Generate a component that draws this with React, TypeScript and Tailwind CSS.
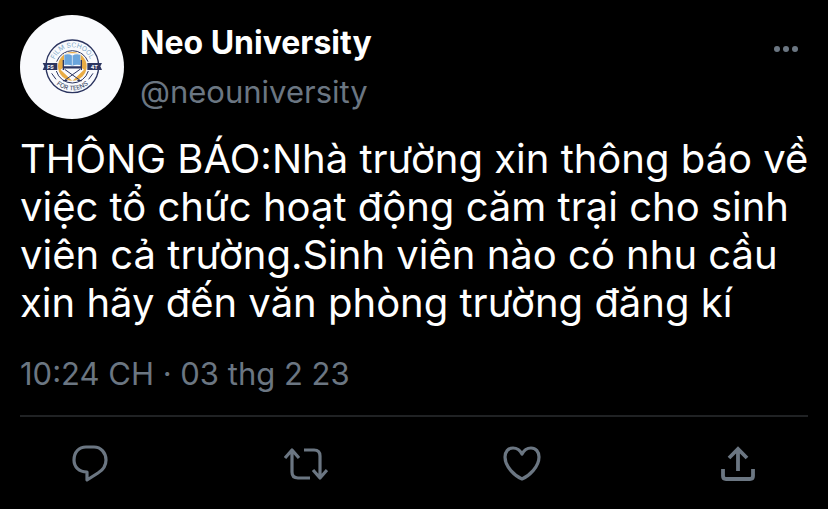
import type { FC, ReactNode } from "react";

const SchoolLogo: FC = () => (
  <svg
    aria-label="Film School for Teens"
    className="h-full w-full"
    role="img"
    viewBox="30 30 312 312"
  >
    <defs>
      <path d="M130 184 A57 57 0 0 1 244 184" id="logo-top" />
      <path d="M115 184 A72 72 0 0 0 259 184" id="logo-bottom" />
    </defs>
    <g fill="none" stroke="#2c3560" strokeWidth="3">
      <circle cx="187" cy="184" r="79" strokeWidth="4" />
      <path d="M140 170 A50 50 0 0 1 234 170" />
      <path d="M139 198 A50 50 0 0 0 235 198" />
      <path d="M125 205 L138 223 M249 205 L236 223" />
    </g>
    <circle cx="187" cy="184" fill="#e9ac45" r="43" />
    <path
      d="M162 145 h50 v41 l10 8 -35 34 -35 -34 10 -8 z"
      fill="#f9fafd"
    />
    <path
      d="M163 149 Q177 145 187 152 Q197 145 211 149 V180 Q197 177 187 182 Q177 177 163 180 Z"
      fill="#6aa5dc"
    />
    <path d="M187 152 V182" stroke="#f9fafd" strokeWidth="2" />
    <g fill="none" stroke="#2c3560" strokeWidth="4">
      <path d="M160 165 V195 M214 165 V195" />
      <path d="M159 187 H215" strokeWidth="7" />
      <path d="M164 193 L210 226 M210 193 L164 226" strokeWidth="3" />
      <path d="M159 227 H172 M202 227 H215" />
    </g>
    <path
      d="M98 174 H142 V195 H98 L103 184 Z M232 174 H276 L271 184 L276 195 H232 Z"
      fill="#2c3560"
    />
    <g fontFamily="Inter, sans-serif" textAnchor="middle">
      <g fill="#f9fafd" fontSize="16" fontWeight="700">
        <text x="121" y="191">
          FS
        </text>
        <text x="253" y="191">
          4T
        </text>
      </g>
      <text fill="#7fa9c9" fontSize="20">
        <textPath href="#logo-top" startOffset="50%">
          FILM SCHOOL
        </textPath>
      </text>
      <text fill="#4b5570" fontSize="19" fontWeight="500">
        <textPath href="#logo-bottom" startOffset="50%">
          FOR TEENS
        </textPath>
      </text>
    </g>
  </svg>
);

const ActionButton: FC<{ label: string; children: ReactNode }> = ({
  label,
  children,
}) => (
  <button aria-label={label} className="h-11 w-11" type="button">
    <svg
      className="h-full w-full"
      fill="none"
      stroke="currentColor"
      strokeWidth="3.2"
      viewBox="0 0 44 44"
    >
      {children}
    </svg>
  </button>
);

export default function App() {
  return (
    <div className="min-h-screen bg-black px-5 pt-[15px] font-['Inter',sans-serif] text-white">
      <article>
        <header className="flex items-start">
          <div className="h-[104px] w-[104px] shrink-0 overflow-hidden rounded-full bg-[#f9fafd]">
            <SchoolLogo />
          </div>
          <div className="ml-4 flex grow flex-col gap-[13px] pt-[10px]">
            <h1 className="text-[32px] leading-9 font-bold">Neo University</h1>
            <a
              className="text-[31px] leading-9 text-[#6b7682]"
              href="#profile"
            >
              @neouniversity
            </a>
          </div>
          <button
            aria-label="More"
            className="mt-5 mr-2 text-[#6b7682]"
            type="button"
          >
            <svg className="h-7 w-7" fill="currentColor" viewBox="0 0 28 28">
              <circle cx="5" cy="14" r="3" />
              <circle cx="14" cy="14" r="3" />
              <circle cx="23" cy="14" r="3" />
            </svg>
          </button>
        </header>
        <p className="mt-4 -mr-5 text-[40px] leading-12">
          THÔNG BÁO:Nhà trường xin thông báo về việc tổ chức hoạt động căm trại
          cho sinh viên cả trường.Sinh viên nào có nhu cầu xin hãy đến văn phòng
          trường đăng kí
        </p>
        <time className="mt-7 block text-[31px] leading-[38px] text-[#6b7682]">
          10:24 CH · 03 thg 2 23
        </time>
        <footer className="mt-[22px] flex justify-between border-t-2 border-[#202224] px-12 pt-[25px] text-[#6b7682]">
          <ActionButton label="Reply">
            <path
              d="M18 5 H26 C33 5 38 11 38 18 C38 24 35 28 30 31 L19 38 V30 C11 30 6 25 6 18 C6 10 11 5 18 5 Z"
              strokeLinejoin="round"
            />
          </ActionButton>
          <ActionButton label="Retweet">
            <path
              d="M1 16 L8 8 L15 16 M8 9 V30 Q8 36 14 36 H26 M20 8 H30 Q36 8 36 14 V35 M29 28 L36 36 L43 28"
              strokeLinejoin="round"
            />
          </ActionButton>
          <ActionButton label="Like">
            <path
              d="M22 12 C20 8 17 6 13 6 C8 6 5 10 5 15 C5 25 15 34 22 37 C29 34 39 25 39 15 C39 10 36 6 31 6 C27 6 24 8 22 12 Z"
              strokeLinejoin="round"
            />
          </ActionButton>
          <ActionButton label="Share">
            <path
              d="M22 29 V7 M13 16 L22 7 L31 16 M7 27 V34 Q7 37 10 37 H34 Q37 37 37 34 V27"
              strokeWidth="3.8"
            />
          </ActionButton>
        </footer>
      </article>
    </div>
  );
}
